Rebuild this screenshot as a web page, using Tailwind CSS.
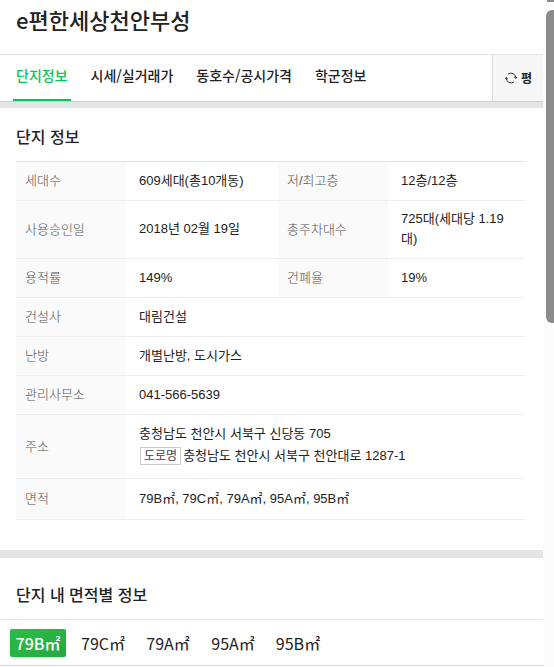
<!DOCTYPE html>
<html lang="ko">
<head>
    <meta charset="UTF-8">
    <meta name="viewport" content="width=device-width, initial-scale=1.0">
    <title>e편한세상천안부성</title>
    <script src="https://cdn.jsdelivr.net/npm/@tailwindcss/browser@4"></script>
</head>
<body class="flex min-h-screen bg-white text-[#222] font-['Noto_Sans_CJK_KR',sans-serif]">

    <main class="flex-1 min-w-0">
        <!-- Title -->
        <header class="h-[55px] px-4 pt-[3px] border-b border-[#e4e4e4]">
            <h1 class="text-[22px] leading-8 font-medium">e편한세상천안부성</h1>
        </header>

        <!-- Tabs -->
        <nav class="flex h-[47px] border-b border-[#cfd0d2]">
            <div class="flex flex-1 gap-[17px] pl-[13px] text-[14px] leading-10 font-medium whitespace-nowrap">
                <a href="#info" class="px-[3px] border-b-2 border-[#03c75a] text-[#03c75a]">단지정보</a>
                <a href="#price" class="px-[3px]">시세/실거래가</a>
                <a href="#public" class="px-[3px]">동호수/공시가격</a>
                <a href="#school" class="px-[3px]">학군정보</a>
            </div>
            <button type="button" class="flex items-center gap-1 w-[51px] pl-3 border-l border-[#dcdcdc] bg-[#f7f7f7] text-[12px] font-bold">
                <svg class="w-3 h-3" viewBox="0 0 12 12" fill="none" stroke="#333" stroke-width="1" aria-hidden="true">
                    <path d="M3 2.2A4.8 4.8 0 0 1 10.8 6.2M9 9.8A4.8 4.8 0 0 1 1.2 5.8" />
                    <path d="M9 4.8l1.8 1.7L12 4.8M0 7.2l1.2-1.7L3 7.2" />
                </svg>
                평
            </button>
        </nav>
        <div class="h-[6px] bg-[#e4e5e7]"></div>

        <!-- Complex info -->
        <section id="info" class="pl-4 pr-[18px] pt-4 pb-[30px]">
            <h2 class="text-[16px] leading-6 font-medium">단지 정보</h2>
            <table class="w-full mt-[13px] table-fixed border-t border-[#e4e4e4] text-[13px] leading-5 text-left font-['Liberation_Sans','Noto_Sans_CJK_KR',sans-serif]">
                <colgroup>
                    <col class="w-[110px]">
                    <col>
                    <col class="w-[110px]">
                    <col class="w-[137px]">
                </colgroup>
                <tbody>
                    <tr class="border-b border-[#eee]">
                        <th scope="row" class="py-[9px] pl-[9px] bg-[#fafafa] font-light text-[#555]">세대수</th>
                        <td class="pt-2 pb-[9px] px-[13px]">609세대(총10개동)</td>
                        <th scope="row" class="py-[9px] pl-[9px] bg-[#fafafa] font-light text-[#555]">저/최고층</th>
                        <td class="pt-2 pb-[9px] px-[13px]">12층/12층</td>
                    </tr>
                    <tr class="border-b border-[#eee]">
                        <th scope="row" class="py-[9px] pl-[9px] bg-[#fafafa] font-light text-[#555]">사용승인일</th>
                        <td class="pt-2 pb-[9px] px-[13px]">2018년 02월 19일</td>
                        <th scope="row" class="py-[9px] pl-[9px] bg-[#fafafa] font-light text-[#555]">총주차대수</th>
                        <td class="pt-2 pb-[9px] px-[13px]">725대(세대당 1.19대)</td>
                    </tr>
                    <tr class="border-b border-[#eee]">
                        <th scope="row" class="py-[9px] pl-[9px] bg-[#fafafa] font-light text-[#555]">용적률</th>
                        <td class="pt-2 pb-[9px] px-[13px]">149%</td>
                        <th scope="row" class="py-[9px] pl-[9px] bg-[#fafafa] font-light text-[#555]">건폐율</th>
                        <td class="pt-2 pb-[9px] px-[13px]">19%</td>
                    </tr>
                    <tr class="border-b border-[#eee]">
                        <th scope="row" class="py-[9px] pl-[9px] bg-[#fafafa] font-light text-[#555]">건설사</th>
                        <td colspan="3" class="pt-2 pb-[9px] px-[13px]">대림건설</td>
                    </tr>
                    <tr class="border-b border-[#eee]">
                        <th scope="row" class="py-[9px] pl-[9px] bg-[#fafafa] font-light text-[#555]">난방</th>
                        <td colspan="3" class="pt-2 pb-[9px] px-[13px]">개별난방, 도시가스</td>
                    </tr>
                    <tr class="border-b border-[#eee]">
                        <th scope="row" class="py-[9px] pl-[9px] bg-[#fafafa] font-light text-[#555]">관리사무소</th>
                        <td colspan="3" class="pt-2 pb-[9px] px-[13px]">041-566-5639</td>
                    </tr>
                    <tr class="border-b border-[#eee]">
                        <th scope="row" class="py-[9px] pl-[9px] bg-[#fafafa] font-light text-[#555]">주소</th>
                        <td colspan="3" class="pt-2 pb-[11px] px-[13px] leading-[22px]">
                            <p>충청남도 천안시 서북구 신당동 705</p>
                            <p class="flex items-center gap-[2px]">
                                <span class="ml-px px-[3px] border border-[#ccc] text-[12px] leading-4 text-[#444]">도로명</span>
                                충청남도 천안시 서북구 천안대로 1287-1
                            </p>
                        </td>
                    </tr>
                    <tr class="border-b border-[#eee]">
                        <th scope="row" class="py-[10px] pl-[9px] bg-[#fafafa] font-light text-[#555]">면적</th>
                        <td colspan="3" class="py-[9px] px-[13px]">79B㎡, 79C㎡, 79A㎡, 95A㎡, 95B㎡</td>
                    </tr>
                </tbody>
            </table>
        </section>
        <div class="h-2 bg-[#e4e5e7]"></div>

        <!-- Info by area -->
        <section id="area">
            <h2 class="px-4 pt-6 pb-[13px] text-[16px] leading-6 font-medium border-b border-[#e4e4e4]">단지 내 면적별 정보</h2>
            <div class="flex gap-[9px] pl-[10px] pt-[9px] pb-2 border-b border-[#d8d8d8] text-[16px] leading-7">
                <button type="button" class="w-14 rounded-xs bg-linear-to-br from-[#27bf44] to-[#28a745] text-white font-medium shadow-sm">79B㎡</button>
                <button type="button" class="w-14">79C㎡</button>
                <button type="button" class="w-14">79A㎡</button>
                <button type="button" class="w-14">95A㎡</button>
                <button type="button" class="w-14">95B㎡</button>
            </div>
        </section>
    </main>

    <!-- Scrollbar -->
    <div class="w-[11px] shrink-0 pl-[3px] bg-[#fcfcfc] overflow-hidden" aria-hidden="true">
        <div class="h-[2px] ml-px bg-[#8b8b8b]"></div>
        <div class="h-[313px] mt-2 rounded-l-md bg-[#8b8b8b]"></div>
    </div>

</body>
</html>
